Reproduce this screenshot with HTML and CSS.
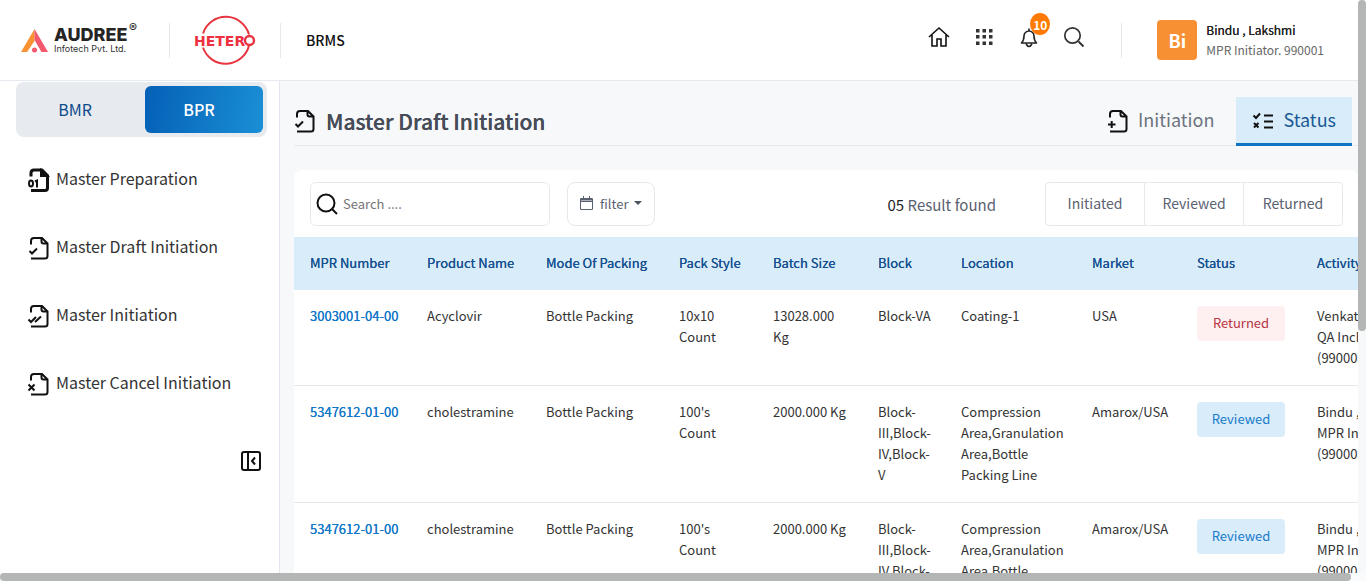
FILE: index.html
```html
<!DOCTYPE html>
<html lang="en">
<head>
<meta charset="utf-8">
<title>BRMS - Master Draft Initiation</title>
<meta name="viewport" content="width=device-width, initial-scale=1">
<link rel="stylesheet" href="styles.css">
</head>
<body>
<svg class="sprite" width="0" height="0" aria-hidden="true">
  <symbol id="file" viewBox="0 0 22 24"><path d="M3 8.500V5q0-3 3-3h8l5.500 5.500V20q0 2.500-2.500 2.500H3M13.500 2v3.500q0 2 2 2h4"/></symbol>
</svg>
<div class="app">
  <header class="topbar">
    <a class="audree" href="#" aria-label="Audree Infotech">
      <svg width="120" height="34" viewBox="0 0 120 34">
        <path d="M14.500 6v12L7 29H1z" fill="#f89133"/>
        <path d="M14.500 6 28 29h-6.500L14.500 17z" fill="#f4586c"/>
        <circle cx="14.500" cy="27" r="2.500" fill="#f4586c"/>
        <text class="audree-name" x="34" y="18">AUDREE</text>
        <text class="audree-reg" x="109" y="9">®</text>
        <text class="audree-sub" x="34" y="29">Infotech Pvt. Ltd.</text>
      </svg>
    </a>
    <span class="rule"></span>
    <a class="hetero" href="#" aria-label="Hetero">
      <svg width="61" height="50" viewBox="0 0 61 50" fill="none" stroke="#e8343f">
        <path d="M8 18.500A24 24 0 0 1 54 19.500M8 32.500A24 24 0 0 0 54 30.500" stroke-width="2"/>
        <circle cx="54.500" cy="25.500" r="4.500" stroke-width="2.400"/>
        <text class="hetero-name" x="-1" y="30.500">HETER</text>
      </svg>
    </a>
    <span class="rule"></span>
    <span class="product">BRMS</span>
    <nav class="tools" aria-label="Tools">
      <button aria-label="Home"><svg width="22" height="22" viewBox="0 0 22 22" fill="none" stroke="#111" stroke-width="1.600"><path d="M1 11 11 2l10 9M4 9v11h5v-7h4v7h5V9"/></svg></button>
      <button aria-label="Apps"><svg width="22" height="22" viewBox="0 0 22 22" fill="#333"><path d="M3 3h3.500v3.500H3zM9.500 3H13v3.500H9.500zM16 3h3.500v3.500H16zM3 9h3.500v3.500H3zM9.500 9H13v3.500H9.500zM16 9h3.500v3.500H16zM3 15.500h3.500V19H3zM9.500 15.500H13V19H9.500zM16 15.500h3.500V19H16z"/></svg></button>
      <button class="bell" aria-label="Notifications"><svg width="22" height="22" viewBox="0 0 22 22" fill="none" stroke="#222" stroke-width="1.600" stroke-linejoin="round"><path d="M3.500 17c2-2 2.500-3.500 2.500-7a5 5 0 0 1 10 0c0 3.500.500 5 2.500 7zM8 18q3 5 6 0M11 2.500V5"/></svg><span class="badge">10</span></button>
      <button aria-label="Search"><svg width="22" height="22" viewBox="0 0 22 22" fill="none" stroke="#333" stroke-width="1.700"><circle cx="9.500" cy="9.500" r="7.700"/><path d="m15.500 15.500 5 5" stroke-width="2"/></svg></button>
    </nav>
    <span class="rule"></span>
    <div class="user">
      <span class="avatar">Bi</span>
      <div><div class="user-name">Bindu , Lakshmi</div><div class="user-role">MPR Initiator. 990001</div></div>
    </div>
  </header>
  <div class="body">
    <aside class="sidebar">
      <div class="switch"><button>BMR</button><button class="on">BPR</button></div>
      <nav class="menu">
        <a href="#"><svg class="icon" viewBox="0 0 22 24"><use href="#file" class="thick"/><path d="M13 2l6.500 6H13z" fill="#111"/><ellipse cx="3" cy="15.500" rx="2" ry="3"/><path d="M7 13.500l2-1v7"/></svg>Master Preparation</a>
        <a href="#"><svg class="icon" viewBox="0 0 22 24"><use href="#file"/><path d="M1.500 15l2.500 2.500 5-5"/></svg>Master Draft Initiation</a>
        <a href="#"><svg class="icon" viewBox="0 0 22 24"><use href="#file"/><path d="M.500 15.500 3 18l5-5M7 18l6-5.500"/></svg>Master Initiation</a>
        <a href="#"><svg class="icon" viewBox="0 0 22 24"><use href="#file"/><path d="M.500 12.500l6 6M6.500 12.500l-6 6"/></svg>Master Cancel Initiation</a>
      </nav>
      <button class="collapse" aria-label="Collapse sidebar"><svg width="22" height="22" viewBox="0 0 22 22" fill="none" stroke="#111" stroke-width="2"><rect x="2" y="2" width="18" height="18" rx="2"/><path d="M8 2v18M15 7.500 12 11l3 3.500"/></svg></button>
    </aside>
    <main class="main">
      <div class="page-head">
        <h1><svg class="icon" viewBox="0 0 22 24"><use href="#file"/><path d="M1.500 15l2.500 2.500 5-5"/></svg>Master Draft Initiation</h1>
        <nav class="tabs">
          <a href="#"><svg class="icon" viewBox="0 0 22 24"><use href="#file"/><path d="M1 15.500h7.500M4.700 12v7"/></svg>Initiation</a>
          <a class="on" href="#"><svg class="icon" viewBox="0 0 22 24"><path d="M12 6.500h9M12 12.500h9M12 18.500h9M1.500 6.500 4 9l4-4.500M2 14l4.500 4.500M6.500 14 2 18.500"/></svg>Status</a>
        </nav>
      </div>
      <section class="panel">
        <div class="filters">
          <label class="search">
            <svg width="22" height="22" viewBox="0 0 22 22" fill="none" stroke="#111" stroke-width="2"><circle cx="10" cy="10" r="8.500"/><path d="m16 16 5 5"/></svg>
            <input type="text" placeholder="Search ...." aria-label="Search">
          </label>
          <button class="filter"><svg width="14" height="16" viewBox="0 0 14 16" fill="none" stroke="#5a6170"><path d="M.500 3.500h12v11H.500zM.500 6.500h12M3.500 1v3M9.500 1v3"/><path d="M1 4.500h11" stroke-width="2"/></svg>filter<span class="caret"></span></button>
          <p class="count"><span>05</span> Result found</p>
          <div class="group"><button>Initiated</button><button>Reviewed</button><button>Returned</button></div>
        </div>
        <table>
          <colgroup><col class="c-mpr"><col class="c-product"><col class="c-mode"><col class="c-pack"><col class="c-batch"><col class="c-block"><col class="c-location"><col class="c-market"><col class="c-status"><col class="c-activity"></colgroup>
          <thead><tr><th>MPR Number</th><th>Product Name</th><th>Mode Of Packing</th><th>Pack Style</th><th>Batch Size</th><th>Block</th><th>Location</th><th>Market</th><th>Status</th><th>Activity</th></tr></thead>
          <tbody>
            <tr><td><a href="#">3003001-04-00</a></td><td>Acyclovir</td><td>Bottle Packing</td><td>10x10 Count</td><td>13028.000 Kg</td><td>Block-VA</td><td>Coating-1</td><td>USA</td><td><span class="pill returned">Returned</span></td><td>Venkat<br>QA Incharge<br>(990007)</td></tr>
            <tr><td><a href="#">5347612-01-00</a></td><td>cholestramine</td><td>Bottle Packing</td><td>100's Count</td><td>2000.000 Kg</td><td>Block-III,Block-IV,Block-V</td><td>Compression Area,Granulation Area,Bottle Packing Line</td><td>Amarox/USA</td><td><span class="pill reviewed">Reviewed</span></td><td>Bindu , Lakshmi<br>MPR Initiator<br>(990001)</td></tr>
            <tr><td><a href="#">5347612-01-00</a></td><td>cholestramine</td><td>Bottle Packing</td><td>100's Count</td><td>2000.000 Kg</td><td>Block-III,Block-IV,Block-V</td><td>Compression Area,Granulation Area,Bottle Packing Line</td><td>Amarox/USA</td><td><span class="pill reviewed">Reviewed</span></td><td>Bindu , Lakshmi<br>MPR Initiator<br>(990001)</td></tr>
          </tbody>
        </table>
      </section>
    </main>
  </div>
</div>
<div class="bar-y"></div>
<div class="bar-x"><div class="thumb-x"></div></div>
</body>
</html>
```
FILE: styles.css
```css
* { box-sizing: border-box; }
body {
  margin: 0;
  font-family: "Noto Sans CJK SC", "Noto Sans", sans-serif;
  font-size: 13px;
  line-height: 21px;
  color: #333;
  overflow: hidden;
}
button, input { font: inherit; color: inherit; }
button { border: 0; padding: 0; background: none; cursor: pointer; }
a { color: inherit; text-decoration: none; }
svg { display: block; flex: none; overflow: visible; }
.sprite { position: absolute; }
.app { display: flex; flex-direction: column; height: 100vh; background: #fff; }

.topbar {
  flex: none;
  display: flex;
  align-items: center;
  height: 81px;
  padding: 0 42px 0 20px;
  border-bottom: 1px solid #e6e9ef;
}
.audree { margin-right: 29px; }
.audree-name { font: 800 18px Inter, sans-serif; fill: #252525; }
.audree-reg { font: 500 12px Inter, sans-serif; fill: #252525; }
.audree-sub { font: 400 9px Inter, sans-serif; fill: #333; }
.rule { flex: none; width: 1px; height: 35px; background: #e6e8ec; }
.hetero { margin: 0 24px 0 25px; }
.hetero-name { font: 700 14px "DejaVu Sans", sans-serif; fill: #ee3040; stroke: none; }
.product { margin-left: 25px; font-size: 14px; font-weight: 500; color: #111; }
.tools { display: flex; gap: 23px; margin: 0 36px 6px auto; }
.bell { position: relative; }
.badge {
  position: absolute;
  left: 12px;
  top: -13px;
  width: 20px;
  height: 22px;
  border-radius: 50%;
  background: #ff7a00;
  color: #fff;
  font-size: 12px;
  font-weight: 700;
  line-height: 23px;
}
.user { display: flex; align-items: center; gap: 9px; margin-left: 35px; }
.avatar {
  width: 40px;
  height: 40px;
  border-radius: 4px;
  background: #f79033;
  color: #fff;
  font-size: 18px;
  font-weight: 700;
  line-height: 41px;
  text-align: center;
}
.user-name, .user-role { font-size: 12px; line-height: 20px; }
.user-name { color: #222; text-shadow: 0 0 0 currentColor; }
.user-role { color: #666; }

.body { flex: 1; display: flex; min-height: 0; }
.sidebar { flex: none; width: 280px; border-right: 1px solid #e3e6ee; display: flex; flex-direction: column; }
.switch {
  display: grid;
  grid-template-columns: 1fr 1fr;
  gap: 11px;
  margin: 1px 12px 0 16px;
  padding: 4px 4px 4px 0;
  height: 55px;
  border-radius: 8px;
  background: #e7eaef;
  color: #0d4a8c;
  font-size: 16px;
}
.switch .on { padding-right: 10px; border-radius: 6px; background: linear-gradient(100deg, #0560b6, #1a8fd6); color: #fff; font-weight: 500; }
.menu { display: flex; flex-direction: column; gap: 42px; padding: 29px 0 0 28px; font-size: 16px; line-height: 24px; }
.menu a { display: flex; align-items: flex-start; gap: 6px; }
.menu .icon { margin-top: 2px; }
.icon { width: 22px; height: 24px; fill: none; stroke: #111; stroke-width: 2; }
.thick { stroke-width: 3; }
.collapse { align-self: flex-end; margin: 54px 17px 0 0; }

.main { flex: 1; min-width: 0; padding: 16px 8px 0 14px; background: #f7f8fa; overflow: hidden; }
.page-head { display: flex; justify-content: space-between; height: 49px; border-bottom: 1px solid #e5e8ec; padding-right: 6px; }
h1 { display: flex; align-items: center; gap: 10px; margin: 0; font-size: 21px; font-weight: 500; color: #474d58; text-shadow: 0 0 0 currentColor; }
.tabs { display: flex; font-size: 18px; color: #6c737f; }
.tabs a { display: flex; align-items: center; gap: 9px; height: 49px; padding: 0 22px 1px 16px; border-bottom: 3px solid transparent; }
.tabs .icon { margin-top: 3px; }
.tabs .on { padding: 0 16px 1px; background: #d9ecfa; border-color: #0f74c4; color: #1a5a96; }

.panel { margin-top: 24px; border-radius: 8px; background: #fff; overflow: hidden; }
.filters { display: flex; align-items: center; padding: 12px 15px 11px 16px; color: #5a6170; }
.search { display: flex; align-items: center; gap: 5px; width: 240px; height: 44px; padding: 0 5px; border: 1px solid #e6e8ee; border-radius: 6px; }
.search input { flex: 1; min-width: 0; border: 0; padding: 0 0 1px; outline: 0; background: none; }
.search input::placeholder { color: #757575; }
.filter { display: flex; align-items: center; gap: 6px; height: 44px; margin-left: 17px; padding: 0 12px 2px; border: 1px solid #e6e8ee; border-radius: 8px; }
.caret { border: 4px solid transparent; border-top-color: #4b5260; border-bottom: 0; }
.count { margin: 0 49px 0 auto; font-size: 15px; }
.count span { color: #222; }
.group { display: flex; width: 298px; height: 44px; border: 1px solid #e6e8ee; border-radius: 4px; }
.group button { flex: 1; padding-bottom: 1px; font-size: 14px; }
.group button + button { border-left: 1px solid #e6e8ee; }

table { table-layout: fixed; width: 1200px; border-collapse: separate; border-spacing: 0; }
th, td { padding: 15px 12px 17px 16px; text-align: left; vertical-align: top; }
th { background: #d9ecfa; color: #14508f; font-weight: 400; white-space: nowrap; text-shadow: 0 0 0 currentColor; }
td { border-bottom: 1px solid #e6e8ec; }
td a { color: #1077c8; text-shadow: 0 0 0 currentColor; }
.c-mpr { width: 117px; }
.c-product { width: 119px; }
.c-mode { width: 133px; }
.c-pack { width: 94px; }
.c-batch { width: 105px; }
.c-block { width: 83px; }
.c-location { width: 131px; }
.c-market { width: 105px; }
.c-status { width: 120px; }
.pill { display: block; width: 88px; height: 35px; margin-top: 1px; border-radius: 4px; line-height: 33px; text-align: center; }
.returned { background: #fef0f1; color: #b73443; }
.reviewed { background: #d9ecfa; color: #187bc9; }

.bar-y { position: fixed; right: 0; top: 0; width: 8px; height: 331px; border-radius: 4px; background: #b4b6b5; }
.bar-x { position: fixed; left: 0; right: 0; bottom: 0; height: 8px; padding-right: 15px; background: #fafbfc; }
.thumb-x { height: 8px; border-radius: 4px; background: #b4b6b5; }
```
